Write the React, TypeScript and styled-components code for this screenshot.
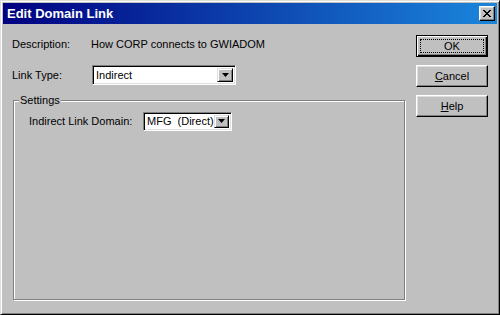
import styled, { createGlobalStyle } from "styled-components";

const GlobalStyle = createGlobalStyle`
  html, body {
    margin: 0;
    padding: 0;
    background: #c0c0c0;
  }
  * { box-sizing: border-box; }
`;

const Window = styled.div`
  width: 500px;
  height: 315px;
  background: #c0c0c0;
  border: 1px solid;
  border-color: #dfdfdf #000 #000 #dfdfdf;
  box-shadow: inset 1px 1px #fff, inset -1px -1px #808080;
  padding: 2px;
  display: flex;
  flex-direction: column;
  font-family: "Liberation Sans", Arial, sans-serif;
  font-size: 11px;
  color: #000;
`;

const TitleBar = styled.div`
  height: 21px;
  display: flex;
  align-items: center;
  justify-content: space-between;
  padding: 0 2px 0 4px;
  background: linear-gradient(to right, #000080, #1a86dc);
`;

const Title = styled.span`
  color: #fff;
  font-weight: bold;
  font-size: 13px;
`;

const CloseButton = styled.div`
  width: 16px;
  height: 15px;
  background: #c0c0c0;
  border: 1px solid;
  border-color: #fff #000 #000 #fff;
  box-shadow: inset -1px -1px #808080, inset 1px 1px #dfdfdf;
  display: flex;
  align-items: center;
  justify-content: center;
`;

const Body = styled.div`
  flex: 1;
  display: flex;
  gap: 11px;
  padding: 10px 9px 0 9px;
`;

const Main = styled.div`
  flex: 1;
  display: flex;
  flex-direction: column;
`;

const Row = styled.div<{ $mt?: number }>`
  display: flex;
  align-items: center;
  height: 20px;
  margin-top: ${(p) => p.$mt ?? 0}px;
`;

const Label = styled.span<{ $w: number }>`
  width: ${(p) => p.$w}px;
  flex-shrink: 0;
`;

const Select = styled.div<{ $w: number; $h?: number }>`
  width: ${(p) => p.$w}px;
  height: ${(p) => p.$h ?? 20}px;
  background: #fff;
  border: 1px solid;
  border-color: #808080 #fff #fff #808080;
  box-shadow: inset 1px 1px #000, inset -1px -1px #dfdfdf;
  padding: 2px;
  display: flex;
  align-items: center;
`;

const SelectText = styled.span`
  flex: 1;
  padding-left: 1px;
  white-space: pre;
`;

const ArrowButton = styled.div`
  width: 16px;
  height: 100%;
  background: #c0c0c0;
  border: 1px solid;
  border-color: #dfdfdf #000 #000 #dfdfdf;
  box-shadow: inset 1px 1px #fff, inset -1px -1px #808080;
  display: flex;
  align-items: center;
  justify-content: center;
`;

const GroupBox = styled.div`
  position: relative;
  margin: 15px 0 0 1px;
  height: 200px;
  border: 1px solid #808080;
  box-shadow: inset 1px 1px #fff, 1px 1px #fff;
  padding: 10px 15px 0 15px;
`;

const Legend = styled.span`
  position: absolute;
  top: -7px;
  left: 5px;
  padding: 0 1px;
  background: #c0c0c0;
  line-height: 13px;
`;

const Buttons = styled.div`
  width: 72px;
  display: flex;
  flex-direction: column;
  gap: 8px;
  padding-top: 1px;
`;

const Button = styled.div<{ $default?: boolean }>`
  height: 22px;
  background: #c0c0c0;
  border: 1px solid;
  border-color: ${(p) => (p.$default ? "#000" : "#fff #000 #000 #fff")};
  box-shadow: ${(p) =>
    p.$default
      ? "inset 1px 1px #fff, inset -1px -1px #000, inset -2px -2px #808080"
      : "inset -1px -1px #808080, inset 1px 1px #dfdfdf"};
  display: flex;
  align-items: center;
  justify-content: center;
  padding: 3px;
`;

const Focus = styled.span<{ $on?: boolean }>`
  flex: 1;
  align-self: stretch;
  display: flex;
  align-items: center;
  justify-content: center;
  border: 1px dotted ${(p) => (p.$on ? "#000" : "transparent")};
`;

const Arrow = () => (
  <svg width="7" height="4" viewBox="0 0 7 4">
    <path d="M0 0h7L3.5 4z" fill="#000" />
  </svg>
);

const CloseIcon = () => (
  <svg width="8" height="7" viewBox="0 0 8 7">
    <path
      d="M0 0h2v1h1v1h2V1h1V0h2v1H7v1H6v1H5v1h1v1h1v1h1v1H6V6H5V5H3v1H2v1H0V6h1V5h1V4h1V3H2V2H1V1H0z"
      fill="#000"
    />
  </svg>
);

export default function App() {
  return (
    <>
      <GlobalStyle />
      <Window>
        <TitleBar>
          <Title>Edit Domain Link</Title>
          <CloseButton>
            <CloseIcon />
          </CloseButton>
        </TitleBar>
        <Body>
          <Main>
            <Row>
              <Label $w={79}>Description:</Label>
              <span>How CORP connects to GWIADOM</span>
            </Row>
            <Row $mt={11}>
              <Label $w={80}>Link Type:</Label>
              <Select $w={144}>
                <SelectText>Indirect</SelectText>
                <ArrowButton>
                  <Arrow />
                </ArrowButton>
              </Select>
            </Row>
            <GroupBox>
              <Legend>Settings</Legend>
              <Row>
                <Label $w={114}>Indirect Link Domain:</Label>
                <Select $w={89} $h={19}>
                  <SelectText>MFG  (Direct)</SelectText>
                  <ArrowButton>
                    <Arrow />
                  </ArrowButton>
                </Select>
              </Row>
            </GroupBox>
          </Main>
          <Buttons>
            <Button $default>
              <Focus $on>OK</Focus>
            </Button>
            <Button>
              <Focus>
                <span>
                  <u>C</u>ancel
                </span>
              </Focus>
            </Button>
            <Button>
              <Focus>
                <span>
                  <u>H</u>elp
                </span>
              </Focus>
            </Button>
          </Buttons>
        </Body>
      </Window>
    </>
  );
}
